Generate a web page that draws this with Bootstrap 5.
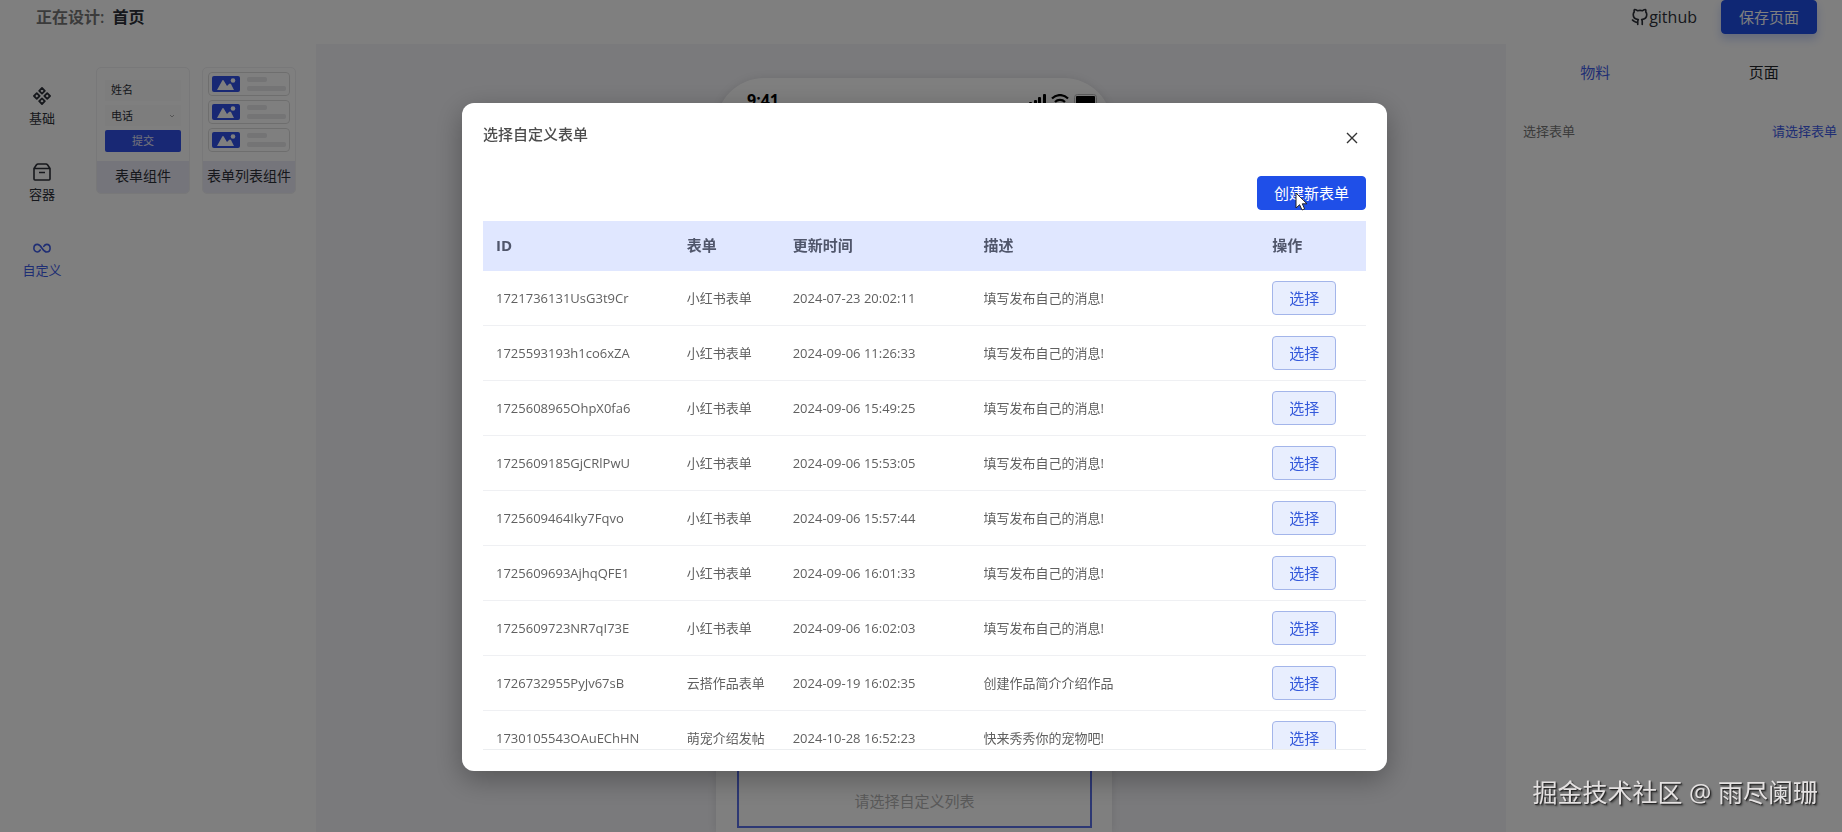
<!DOCTYPE html>
<html lang="zh-CN">
<head>
<meta charset="utf-8">
<meta name="viewport" content="width=device-width, initial-scale=1">
<title>页面设计</title>
<link rel="stylesheet" href="https://cdn.jsdelivr.net/npm/bootstrap@5.3.0/dist/css/bootstrap.min.css">
<style>
  :root { --brand: #1f4fe8; --ink: #2d3038; }
  body { font-family: "Open Sans", "Noto Sans CJK SC", sans-serif; font-size: 13px; line-height: 20px; color: var(--ink); background: #fff; }
  svg { display: block; flex: none; }
  .btn-brand { --bs-btn-bg: var(--brand); --bs-btn-border-color: var(--brand); --bs-btn-color: #fff; --bs-btn-hover-bg: #1a44cc; --bs-btn-hover-color: #fff;
    --bs-btn-font-size: 15px; --bs-btn-line-height: 20px; --bs-btn-padding-y: 6px; --bs-btn-padding-x: 17px; --bs-btn-border-radius: 4px; }
  .btn-pick { --bs-btn-bg: #e8eefe; --bs-btn-border-color: #a3b5ea; --bs-btn-color: #3459db; --bs-btn-hover-bg: #dbe5ff; --bs-btn-hover-color: #3459db;
    --bs-btn-font-size: 15px; --bs-btn-line-height: 20px; --bs-btn-padding-y: 6px; --bs-btn-padding-x: 16px; --bs-btn-border-radius: 4px; }

  .topbar { height: 44px; padding: 0 25px 10px 36px; font-size: 16px; }
  .topbar .designing { color: #777; }
  .btn-save { box-shadow: 0 5px 10px rgba(31, 79, 232, .25); }
  .text-brand { color: #3f5ce8; }

  .left-panel { width: 316px; }
  .rail { width: 84px; padding-top: 41px; gap: 31px; }
  .rail .btn { gap: 1px; height: 45px; color: var(--ink); font-size: 13px; line-height: 20px; }
  .rail .btn.active { color: #3f5ce8; }
  .rail svg { margin: 2px; }
  .palette { padding: 23px 0 0 12px; gap: 12px; }
  .widget { width: 94px; border: 1px solid #f0f0f2; border-radius: 5px; overflow: hidden; }
  .widget-art { height: 93px; }
  .widget-name { height: 32px; line-height: 30px; font-size: 14px; background: #eaebf6; white-space: nowrap; text-align: center; }
  .mini-form { padding: 12px 8px 7px; gap: 4px; font-size: 11px; }
  .mini-field { height: 21px; padding: 0 6px; background: #fbfbfb; }
  .mini-submit { height: 22px; line-height: 22px; border-radius: 2px; background: #3150e8; color: #e6e6f5; text-align: center; }
  .mini-list { padding: 4px 5px; gap: 4px; }
  .mini-row { height: 24px; border: 1px solid #ddd; border-radius: 4px; padding: 0 3px; gap: 7px; }
  .mini-bar { height: 5px; background: #e8e8ea; border-radius: 2px; }

  .canvas { background: #f4f4f8; }
  .phone { width: 396px; margin: 34px 0 0 6px; border-radius: 48px 48px 0 0; background: #fff; box-shadow: 0 0 8px rgba(0, 0, 0, .1); }
  .phone-status { padding: 12px 14px 0 31px; height: 50px; font-size: 16px; color: #000; }
  .drop-zone { margin: 0 20px 4px 21px; padding: 0 0 15px; border: 2px solid #5a70e8; color: #b4b4b4; font-size: 15px; }

  .right-panel { width: 336px; padding-left: 5px; }
  .right-tabs { margin-right: -6px; }
  .right-tabs .btn { padding: 18px 0; font-size: 15px; line-height: 20px; }
  .setting { padding: 21px 5px 0 12px; }
  .setting label { color: #777; }

  .modal { padding-left: 7px; }
  .modal-dialog { --bs-modal-width: 925px; margin-top: 103px; margin-bottom: 0; }
  .modal-content { border: 0; border-radius: 12px; box-shadow: 0 8px 28px rgba(0, 0, 0, .3); color: #4c4c4c; }
  .modal-header { padding: 20px 26px 0 21px; border: 0; }
  .modal-title { font-size: 15px; line-height: 22px; font-weight: 500; }
  .modal-body { padding: 27px 21px 21px; }
  .form-scroll { max-height: calc(100vh - 303px); margin-top: 11px; overflow: hidden; border-bottom: 1px solid #eceef0; }
  .form-table { --bs-table-color: #606266; --bs-table-bg: transparent; table-layout: fixed; }
  .form-table > :not(caption) > * > * { padding: 0 13px; height: 55px; vertical-align: middle; border-color: #eff0f3; white-space: nowrap; color: #606060; }
  .form-table > thead > tr > th { height: 49px; font-size: 15px; font-weight: 700; color: #50566b; background: #e0e7ff; border-color: #e0e7ff; }
  .form-table .w-id { width: 21.6%; }
  .form-table .w-name { width: 12%; }
  .form-table .w-desc { width: 32.7%; }
  .pointer { position: absolute; left: 37px; top: 16px; }

  .signature { position: fixed; right: 24px; bottom: 22px; z-index: 1100; font-size: 25px; line-height: 36px; color: #e4e1e1; text-shadow: 1px 1px 1px #222, 2px 2px 2px rgba(0, 0, 0, .4); }
</style>
</head>
<body>
<div class="vh-100 d-flex flex-column overflow-hidden">
  <header class="topbar d-flex align-items-center flex-shrink-0">
    <span class="designing fw-semibold">正在设计:</span>
    <span class="fw-bold ms-2">首页</span>
    <a href="#" class="ms-auto d-flex align-items-center text-reset text-decoration-none">
      <svg width="18" height="18" viewBox="0 0 24 24" fill="none" stroke="currentColor" stroke-width="2.200" stroke-linejoin="round" stroke-linecap="round"><path d="M9 22v-4c0-1 .1-1.500.8-2.500C5.500 15 3 13 3 9c0-1.500.4-2.800 1.300-3.800C4 4 4.100 2.800 4.500 2c1.500 0 3 .8 4 1.600 2.200-.5 4.800-.5 7 0 1-.8 2.500-1.600 4-1.600.4.800.5 2 .2 3.200C20.600 6.200 21 7.500 21 9c0 4-2.500 6-6.800 6.500.7 1 .8 1.500.8 2.500v4M9 19c-3.500.8-4.500-1.500-7-3"/></svg>
      <span>github</span>
    </a>
    <button type="button" class="btn btn-brand btn-save ms-4">保存页面</button>
  </header>

  <div class="d-flex flex-grow-1 overflow-hidden">
    <aside class="left-panel d-flex flex-shrink-0">
      <nav class="rail d-flex flex-column">
        <button type="button" class="btn border-0 p-0 d-flex flex-column align-items-center">
          <svg width="18" height="18" viewBox="0 0 18 18" fill="none" stroke="currentColor" stroke-width="1.800" stroke-linejoin="round"><path d="M9 1l2.800 2.800L9 6.600 6.200 3.800zM9 11.400l2.800 2.800L9 17l-2.800-2.800zM3.800 6.200L6.600 9l-2.800 2.800L1 9zM14.200 6.200L17 9l-2.800 2.800L11.400 9z"/></svg>
          <span>基础</span>
        </button>
        <button type="button" class="btn border-0 p-0 d-flex flex-column align-items-center">
          <svg width="18" height="18" viewBox="0 0 18 18" fill="none" stroke="currentColor" stroke-width="1.600" stroke-linejoin="round"><path d="M1 5.500L3.500 1.800Q4 1 5 1h8q1 0 1.500.8L17 5.500V16q0 1-1 1H2q-1 0-1-1zM1 5.500h16M6 9.500h6"/></svg>
          <span>容器</span>
        </button>
        <button type="button" class="btn border-0 p-0 d-flex flex-column align-items-center active">
          <svg width="18" height="18" viewBox="0 0 18 18" fill="none" stroke="currentColor" stroke-width="1.600" stroke-linecap="round"><path d="M7.200 11C6.400 12.300 5.600 13 4.300 13A3.600 3.600 0 0 1 .9 9.200C.9 7 2.400 5.400 4.300 5.400c4.400 0 5 7.600 9.400 7.600 1.900 0 3.400-1.600 3.400-3.800S15.600 5.400 13.700 5.400c-1.300 0-2.100.7-2.900 2"/></svg>
          <span>自定义</span>
        </button>
      </nav>
      <section class="palette d-flex align-items-start">
        <div class="widget flex-shrink-0">
          <div class="widget-art mini-form d-flex flex-column">
            <div class="mini-field">姓名</div>
            <div class="mini-field d-flex align-items-center justify-content-between">电话
              <svg width="6" height="6" viewBox="0 0 6 6" fill="none" stroke="#aaa"><path d="M1 2l2 2 2-2"/></svg>
            </div>
            <div class="mini-submit">提交</div>
          </div>
          <div class="widget-name">表单组件</div>
        </div>
        <div class="widget flex-shrink-0">
          <div class="widget-art mini-list d-flex flex-column" id="miniList"></div>
          <div class="widget-name">表单列表组件</div>
        </div>
      </section>
    </aside>

    <main class="canvas flex-grow-1 d-flex justify-content-center overflow-hidden">
      <div class="phone d-flex flex-column">
        <div class="phone-status d-flex align-items-start">
          <span class="fw-bold">9:41</span>
          <svg class="ms-auto mt-1" width="70" height="14" viewBox="0 0 70 14" fill="#000"><rect x="1" y="8" width="3" height="5" rx="1"/><rect x="6" y="6" width="3" height="7" rx="1"/><rect x="10" y="3" width="3" height="10" rx="1"/><rect x="15" y="0" width="3" height="13" rx="1"/><path d="M24 4.500a11 11 0 0 1 16 0M27 8a7 7 0 0 1 10 0" fill="none" stroke="#000" stroke-width="2.200"/><path d="M29.500 10.500a4 4 0 0 1 5 0L32 13z"/><rect x="46.500" y=".5" width="22" height="12" rx="3" fill="none" stroke="#bbb"/><rect x="48" y="2" width="19" height="9" rx="1"/></svg>
        </div>
        <div class="drop-zone flex-grow-1 d-flex align-items-end justify-content-center">请选择自定义列表</div>
      </div>
    </main>

    <aside class="right-panel flex-shrink-0 overflow-hidden">
      <div class="right-tabs d-flex">
        <button type="button" class="btn border-0 w-50 text-brand">物料</button>
        <button type="button" class="btn border-0 w-50">页面</button>
      </div>
      <div class="setting d-flex justify-content-between">
        <label for="pickForm">选择表单</label>
        <a href="#" id="pickForm" class="text-brand text-decoration-none">请选择表单</a>
      </div>
    </aside>
  </div>
</div>

<div class="modal-backdrop show"></div>
<div class="modal d-block overflow-hidden" tabindex="-1" role="dialog" aria-modal="true" aria-labelledby="dlgTitle">
  <div class="modal-dialog">
    <div class="modal-content">
      <div class="modal-header align-items-start justify-content-between">
        <h1 class="modal-title" id="dlgTitle">选择自定义表单</h1>
        <button type="button" class="btn border-0 p-0 mt-1" aria-label="关闭">
          <svg width="18" height="22" viewBox="0 0 18 22" fill="none" stroke="#333" stroke-width="1.400"><path d="M4 6l10 10M14 6L4 16"/></svg>
        </button>
      </div>
      <div class="modal-body">
        <div class="d-flex justify-content-end">
          <div class="position-relative">
            <button type="button" class="btn btn-brand px-3 d-block">创建新表单</button>
            <svg class="pointer" width="14" height="20" viewBox="0 0 14 20"><path d="M2 1v15l3.600-3.300L8 18l2.600-1.200-2.300-5H13z" fill="#fff" stroke="#222"/></svg>
          </div>
        </div>
        <div class="form-scroll">
          <table class="table form-table mb-0">
            <colgroup><col class="w-id"><col class="w-name"><col class="w-id"><col class="w-desc"><col></colgroup>
            <thead><tr><th scope="col">ID</th><th scope="col">表单</th><th scope="col">更新时间</th><th scope="col">描述</th><th scope="col">操作</th></tr></thead>
            <tbody id="formRows"></tbody>
          </table>
        </div>
      </div>
    </div>
  </div>
</div>

<div class="signature">掘金技术社区 @ 雨尽阑珊</div>

<script src="https://cdn.jsdelivr.net/npm/bootstrap@5.3.0/dist/js/bootstrap.bundle.min.js"></script>
<script>
  const rows = [
    ['1721736131UsG3t9Cr', '小红书表单', '2024-07-23 20:02:11', '填写发布自己的消息!'],
    ['1725593193h1co6xZA', '小红书表单', '2024-09-06 11:26:33', '填写发布自己的消息!'],
    ['1725608965OhpX0fa6', '小红书表单', '2024-09-06 15:49:25', '填写发布自己的消息!'],
    ['1725609185GjCRlPwU', '小红书表单', '2024-09-06 15:53:05', '填写发布自己的消息!'],
    ['1725609464Iky7Fqvo', '小红书表单', '2024-09-06 15:57:44', '填写发布自己的消息!'],
    ['1725609693AjhqQFE1', '小红书表单', '2024-09-06 16:01:33', '填写发布自己的消息!'],
    ['1725609723NR7qI73E', '小红书表单', '2024-09-06 16:02:03', '填写发布自己的消息!'],
    ['1726732955PyJv67sB', '云搭作品表单', '2024-09-19 16:02:35', '创建作品简介介绍作品'],
    ['1730105543OAuEChHN', '萌宠介绍发帖', '2024-10-28 16:52:23', '快来秀秀你的宠物吧!']
  ];
  document.getElementById('formRows').innerHTML = rows.map(r =>
    '<tr>' + r.map(c => `<td>${c}</td>`).join('') + '<td><button type="button" class="btn btn-pick">选择</button></td></tr>').join('');
  document.getElementById('miniList').innerHTML = `
    <div class="mini-row d-flex align-items-center">
      <svg width="28" height="16" viewBox="0 0 28 16"><rect width="28" height="16" rx="2" fill="#3150e8"/><path d="M5 14l5-9q1-2 2 0l3 5 2-2q1-1 2 0l3 6z" fill="#fff"/><circle cx="21" cy="4.500" r="2.300" fill="#fff"/></svg>
      <div class="flex-grow-1 d-flex flex-column gap-1"><div class="mini-bar w-50"></div><div class="mini-bar"></div></div>
    </div>`.repeat(3);
</script>
</body>
</html>
